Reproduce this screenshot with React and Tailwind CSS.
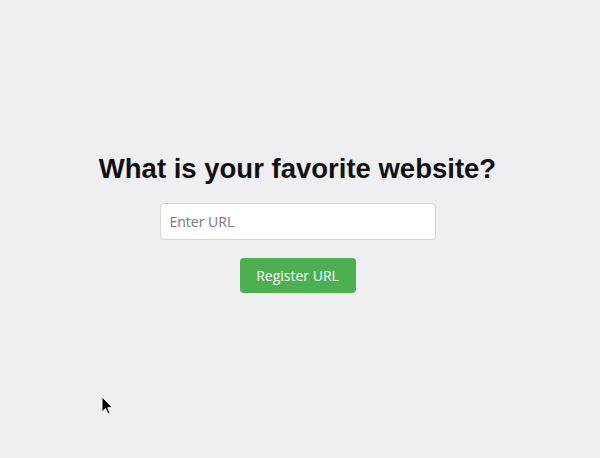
export default function App() {
  return (
    <div className="relative min-h-screen bg-[#efeef0] flex flex-col items-center justify-center pb-[12px] pr-[5px] font-['Open_Sans',sans-serif]">
      {/* Heading */}
      <h1 className="text-[27.5px] leading-[32px] font-bold text-[#111] font-['Liberation_Sans',Arial,sans-serif]">
        What is your favorite website?
      </h1>

      {/* Form */}
      <input
        type="text"
        placeholder="Enter URL"
        className="mt-[18px] w-[276px] h-[37px] px-[9px] bg-white border border-[#d4d4d6] rounded-[4px] text-[14px] text-[#333] placeholder:text-[#777] outline-none"
      />
      <button className="mt-[18px] w-[116px] h-[35px] bg-[#4caf50] text-white text-[14px] rounded-[4px]">
        Register URL
      </button>

      {/* Mouse cursor */}
      <svg className="absolute left-[101px] top-[396px]" width="13" height="20" viewBox="0 0 13 20">
        <path d="M1 1 L1 16 L4.5 12.5 L7 18 L9 17 L6.7 11.7 L11.5 11.7 Z" fill="#000" stroke="#fff" strokeWidth="1" />
      </svg>
    </div>
  )
}
